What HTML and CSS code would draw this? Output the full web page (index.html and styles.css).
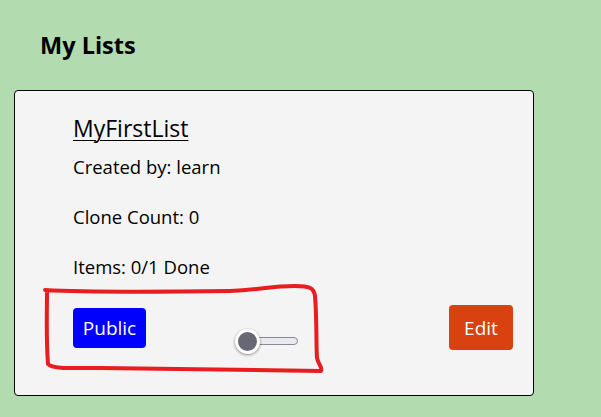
FILE: index.html
```html
<!DOCTYPE html>
<html lang="en">
<head>
<meta charset="utf-8">
<title>My Lists</title>
<link rel="stylesheet" href="styles.css">
</head>
<body>
<main class="page">
  <h2 class="page-title">My Lists</h2>
  <section class="card">
    <a class="list-name" href="#">MyFirstList</a>
    <p class="meta meta-first">Created by: learn</p>
    <p class="meta">Clone Count: 0</p>
    <p class="meta">Items: 0/1 Done</p>
    <div class="actions">
      <button class="btn btn-public" type="button">Public</button>
      <div class="slider" role="slider" aria-valuenow="0">
        <div class="slider-track"></div>
        <div class="slider-thumb"></div>
      </div>
      <button class="btn btn-edit" type="button">Edit</button>
    </div>
  </section>
</main>
<svg class="annotation" width="601" height="417" viewBox="0 0 601 417" aria-hidden="true">
  <path d="M45 290 C 80 292, 150 292, 230 291 C 260 290, 270 286, 295 286 C 310 286, 314 288, 315 296 C 317 320, 316 345, 317 358 C 319 366, 323 368, 321 371 C 300 371, 200 369, 100 368 C 70 368, 52 369, 48 364 C 46 340, 47 310, 47 292" fill="none" stroke="#e91c1f" stroke-width="4" stroke-linecap="round" stroke-linejoin="round"/>
</svg>
</body>
</html>
```
FILE: styles.css
```css
html, body {
  margin: 0;
  padding: 0;
}
body {
  background: #b2dbb0;
  font-family: "Open Sans", "Noto Sans", sans-serif;
  color: #000;
  width: 601px;
  height: 417px;
  overflow: hidden;
  position: relative;
}
.page {
  padding: 29px 0 0 14px;
}
.page-title {
  margin: 0 0 0 26px;
  font-size: 23.5px;
  font-weight: 700;
  line-height: 32px;
}
.card {
  margin-top: 29px;
  border: 1px solid #000;
  border-radius: 4px;
  background: #f4f4f4;
  padding: 22px 20px 0 58px;
  box-sizing: content-box;
  display: flex;
  flex-direction: column;
  align-items: flex-start;
  width: 440px;
  height: 282px;
}
.list-name {
  color: #000;
  font-size: 23px;
  line-height: 30px;
  text-decoration: underline;
  text-decoration-thickness: 1px;
  text-underline-offset: 3px;
}
.meta {
  margin: 26px 0 0 0;
  font-size: 18.5px;
  line-height: 24px;
}
.meta-first {
  margin-top: 12px;
}
.actions {
  margin-top: 26px;
  align-self: stretch;
  display: flex;
  align-items: center;
  height: 45px;
}
.btn {
  border: none;
  color: #fff;
  font-family: inherit;
  font-size: 19px;
  border-radius: 4px;
  padding: 0;
  display: flex;
  align-items: center;
  justify-content: center;
}
.btn-public {
  background: #0000ff;
  width: 73px;
  height: 40px;
}
.btn-edit {
  background: #d94111;
  width: 64px;
  height: 45px;
  margin-left: auto;
}
.slider {
  margin-left: 90px;
  margin-top: 27px;
  width: 62px;
  height: 25px;
  display: flex;
  align-items: center;
  position: relative;
}
.slider-track {
  width: 100%;
  height: 8px;
  box-sizing: border-box;
  background: #e9e9f0;
  border: 1px solid #8a8a92;
  border-radius: 4px;
}
.slider-thumb {
  position: absolute;
  left: -1px;
  top: 0;
  width: 25px;
  height: 25px;
  box-sizing: border-box;
  border-radius: 50%;
  background: #686875;
  border: 3px solid #fff;
  box-shadow: 0 1px 3px rgba(0,0,0,0.45);
}
.annotation {
  position: absolute;
  left: 0;
  top: 0;
  pointer-events: none;
}
```
